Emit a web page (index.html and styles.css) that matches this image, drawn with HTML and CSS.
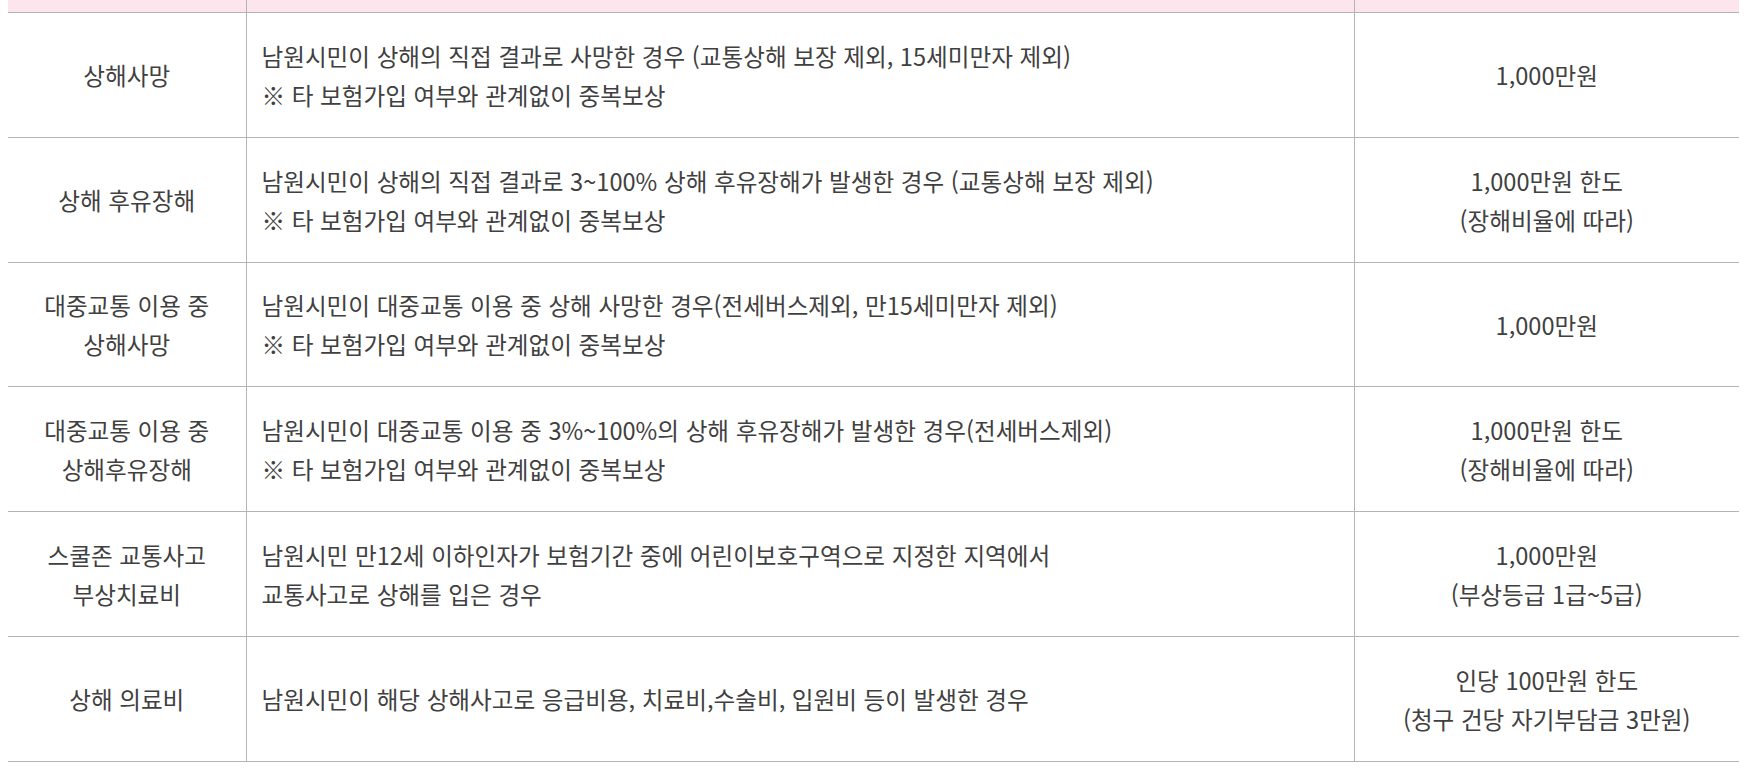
FILE: index.html
```html
<!DOCTYPE html>
<html lang="ko">
<head>
<meta charset="utf-8">
<link rel="stylesheet" href="styles.css">
</head>
<body>
<table class="tbl">
  <colgroup>
    <col class="c1">
    <col class="c2">
    <col class="c3">
  </colgroup>
  <thead>
    <tr class="head"><th></th><th></th><th></th></tr>
  </thead>
  <tbody>
    <tr>
      <td class="name">상해사망</td>
      <td class="desc">남원시민이 상해의 직접 결과로 사망한 경우 (교통상해 보장 제외, 15세미만자 제외)<br>※ 타 보험가입 여부와 관계없이 중복보상</td>
      <td class="amt">1,000만원</td>
    </tr>
    <tr>
      <td class="name">상해 후유장해</td>
      <td class="desc">남원시민이 상해의 직접 결과로 3~100% 상해 후유장해가 발생한 경우 (교통상해 보장 제외)<br>※ 타 보험가입 여부와 관계없이 중복보상</td>
      <td class="amt">1,000만원 한도<br>(장해비율에 따라)</td>
    </tr>
    <tr>
      <td class="name">대중교통 이용 중<br>상해사망</td>
      <td class="desc">남원시민이 대중교통 이용 중 상해 사망한 경우(전세버스제외, 만15세미만자 제외)<br>※ 타 보험가입 여부와 관계없이 중복보상</td>
      <td class="amt">1,000만원</td>
    </tr>
    <tr>
      <td class="name">대중교통 이용 중<br>상해후유장해</td>
      <td class="desc">남원시민이 대중교통 이용 중 3%~100%의 상해 후유장해가 발생한 경우(전세버스제외)<br>※ 타 보험가입 여부와 관계없이 중복보상</td>
      <td class="amt">1,000만원 한도<br>(장해비율에 따라)</td>
    </tr>
    <tr>
      <td class="name">스쿨존 교통사고<br>부상치료비</td>
      <td class="desc">남원시민 만12세 이하인자가 보험기간 중에 어린이보호구역으로 지정한 지역에서<br>교통사고로 상해를 입은 경우</td>
      <td class="amt">1,000만원<br>(부상등급 1급~5급)</td>
    </tr>
    <tr>
      <td class="name">상해 의료비</td>
      <td class="desc">남원시민이 해당 상해사고로 응급비용, 치료비,수술비, 입원비 등이 발생한 경우</td>
      <td class="amt">인당 100만원 한도<br>(청구 건당 자기부담금 3만원)</td>
    </tr>
  </tbody>
</table>
</body>
</html>
```

FILE: styles.css
```css
html, body {
  background: #ffffff;
}
body {
  margin: 0 7px 0 8px;
  font-family: "Noto Sans CJK KR", "Noto Sans", sans-serif;
  color: #404040;
  font-size: 23.6px;
}
.tbl {
  width: 100%;
  border-collapse: collapse;
  table-layout: fixed;
}
.c1 { width: 238px; }
.c3 { width: 385px; }
.head th {
  height: 12px;
  padding: 0;
  background: #fde5ee;
  border-bottom: 1px solid #b4b4b4;
}
.head th + th {
  border-left: 1px solid #b4b4b4;
}
td {
  height: 121.8px;
  padding: 2px 15px 0;
  line-height: 39px;
  border-bottom: 1px solid #b4b4b4;
  vertical-align: middle;
}
td + td {
  border-left: 1px solid #b4b4b4;
}
.name, .amt {
  text-align: center;
}
.desc {
  text-align: left;
}
```
